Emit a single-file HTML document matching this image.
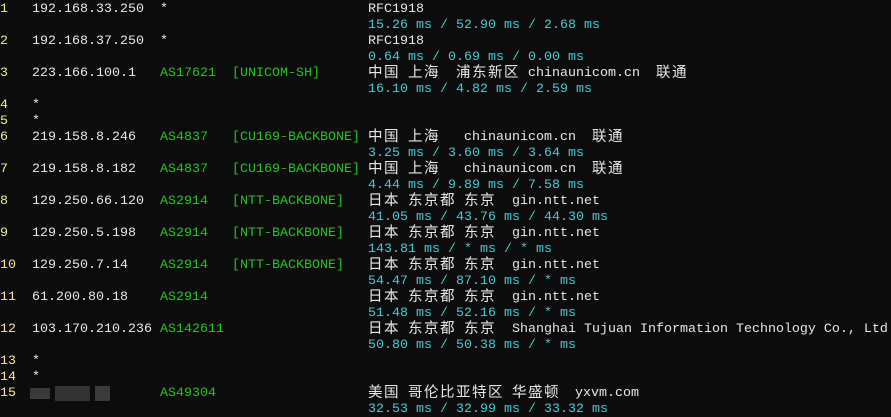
<!DOCTYPE html>
<html><head><meta charset="utf-8"><style>
html,body{margin:0;padding:0;background:#0c0c0c;width:891px;height:417px;overflow:hidden}
body{position:relative;font-family:"Liberation Mono","Noto Sans CJK SC",monospace;font-size:13.33px;color:#e8e8e8}
.l{position:absolute;height:16px;line-height:16px;white-space:pre}
.s{position:absolute;white-space:pre}
.y{color:#f2eaa0}.g{color:#22c322}.c{color:#4cc9d0}
.k{position:absolute;top:-2px;height:16px;line-height:16px;white-space:pre;letter-spacing:1.5px;font-size:14.5px;font-family:"Noto Sans CJK SC",sans-serif}
.b{position:absolute}
</style></head><body>
<div class="l" style="top:2px;left:0"><span class="s y">1</span><span class="s" style="left:32px">192.168.33.250</span><span class="s" style="left:160px">*</span><span class="s" style="left:368px">RFC1918</span></div>
<div class="l c" style="top:18px;left:368px">15.26 ms / 52.90 ms / 2.68 ms</div>
<div class="l" style="top:34px;left:0"><span class="s y">2</span><span class="s" style="left:32px">192.168.37.250</span><span class="s" style="left:160px">*</span><span class="s" style="left:368px">RFC1918</span></div>
<div class="l c" style="top:50px;left:368px">0.64 ms / 0.69 ms / 0.00 ms</div>
<div class="l" style="top:66px;left:0"><span class="s y">3</span><span class="s" style="left:32px">223.166.100.1</span><span class="s g" style="left:160px">AS17621</span><span class="s g" style="left:232px">[UNICOM-SH]</span><span class="k" style="left:368px">中国</span><span class="k" style="left:408px">上海</span><span class="k" style="left:456px">浦东新区</span><span class="s" style="left:528px">chinaunicom.cn</span><span class="k" style="left:656px">联通</span></div>
<div class="l c" style="top:82px;left:368px">16.10 ms / 4.82 ms / 2.59 ms</div>
<div class="l" style="top:98px;left:0"><span class="s y">4</span><span class="s" style="left:32px">*</span></div>
<div class="l" style="top:114px;left:0"><span class="s y">5</span><span class="s" style="left:32px">*</span></div>
<div class="l" style="top:130px;left:0"><span class="s y">6</span><span class="s" style="left:32px">219.158.8.246</span><span class="s g" style="left:160px">AS4837</span><span class="s g" style="left:232px">[CU169-BACKBONE]</span><span class="k" style="left:368px">中国</span><span class="k" style="left:408px">上海</span><span class="s" style="left:464px">chinaunicom.cn</span><span class="k" style="left:592px">联通</span></div>
<div class="l c" style="top:146px;left:368px">3.25 ms / 3.60 ms / 3.64 ms</div>
<div class="l" style="top:162px;left:0"><span class="s y">7</span><span class="s" style="left:32px">219.158.8.182</span><span class="s g" style="left:160px">AS4837</span><span class="s g" style="left:232px">[CU169-BACKBONE]</span><span class="k" style="left:368px">中国</span><span class="k" style="left:408px">上海</span><span class="s" style="left:464px">chinaunicom.cn</span><span class="k" style="left:592px">联通</span></div>
<div class="l c" style="top:178px;left:368px">4.44 ms / 9.89 ms / 7.58 ms</div>
<div class="l" style="top:194px;left:0"><span class="s y">8</span><span class="s" style="left:32px">129.250.66.120</span><span class="s g" style="left:160px">AS2914</span><span class="s g" style="left:232px">[NTT-BACKBONE]</span><span class="k" style="left:368px">日本</span><span class="k" style="left:408px">东京都</span><span class="k" style="left:464px">东京</span><span class="s" style="left:512px">gin.ntt.net</span></div>
<div class="l c" style="top:210px;left:368px">41.05 ms / 43.76 ms / 44.30 ms</div>
<div class="l" style="top:226px;left:0"><span class="s y">9</span><span class="s" style="left:32px">129.250.5.198</span><span class="s g" style="left:160px">AS2914</span><span class="s g" style="left:232px">[NTT-BACKBONE]</span><span class="k" style="left:368px">日本</span><span class="k" style="left:408px">东京都</span><span class="k" style="left:464px">东京</span><span class="s" style="left:512px">gin.ntt.net</span></div>
<div class="l c" style="top:242px;left:368px">143.81 ms / * ms / * ms</div>
<div class="l" style="top:258px;left:0"><span class="s y">10</span><span class="s" style="left:32px">129.250.7.14</span><span class="s g" style="left:160px">AS2914</span><span class="s g" style="left:232px">[NTT-BACKBONE]</span><span class="k" style="left:368px">日本</span><span class="k" style="left:408px">东京都</span><span class="k" style="left:464px">东京</span><span class="s" style="left:512px">gin.ntt.net</span></div>
<div class="l c" style="top:274px;left:368px">54.47 ms / 87.10 ms / * ms</div>
<div class="l" style="top:290px;left:0"><span class="s y">11</span><span class="s" style="left:32px">61.200.80.18</span><span class="s g" style="left:160px">AS2914</span><span class="k" style="left:368px">日本</span><span class="k" style="left:408px">东京都</span><span class="k" style="left:464px">东京</span><span class="s" style="left:512px">gin.ntt.net</span></div>
<div class="l c" style="top:306px;left:368px">51.48 ms / 52.16 ms / * ms</div>
<div class="l" style="top:322px;left:0"><span class="s y">12</span><span class="s" style="left:32px">103.170.210.236</span><span class="s g" style="left:160px">AS142611</span><span class="k" style="left:368px">日本</span><span class="k" style="left:408px">东京都</span><span class="k" style="left:464px">东京</span><span class="s" style="left:512px">Shanghai Tujuan Information Technology Co., Ltd</span></div>
<div class="l c" style="top:338px;left:368px">50.80 ms / 50.38 ms / * ms</div>
<div class="l" style="top:354px;left:0"><span class="s y">13</span><span class="s" style="left:32px">*</span></div>
<div class="l" style="top:370px;left:0"><span class="s y">14</span><span class="s" style="left:32px">*</span></div>
<div class="l" style="top:386px;left:0"><span class="s y">15</span><span class="s g" style="left:160px">AS49304</span><span class="k" style="left:368px">美国</span><span class="k" style="left:408px">哥伦比亚特区</span><span class="k" style="left:512px">华盛顿</span><span class="s" style="left:575px">yxvm.com</span></div>
<div class="b" style="left:30px;top:388px;width:20px;height:11px;background:#3a3a3a"></div>
<div class="b" style="left:55px;top:386px;width:35px;height:15px;background:#333"></div>
<div class="b" style="left:95px;top:386px;width:15px;height:15px;background:#3a3a3a"></div>
<div class="l c" style="top:402px;left:368px">32.53 ms / 32.99 ms / 33.32 ms</div>
</body></html>
